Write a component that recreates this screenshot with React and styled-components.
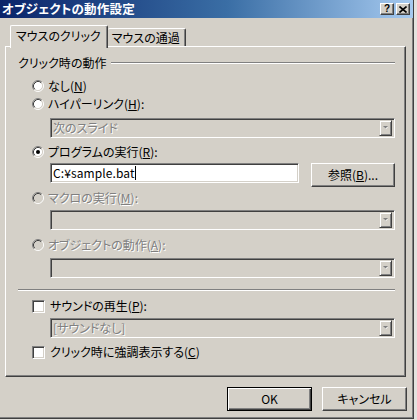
import React from 'react';
import styled, { createGlobalStyle } from 'styled-components';

const FONT = `"Noto Sans CJK JP", "Noto Sans", sans-serif`;

const GlobalStyle = createGlobalStyle`
  html, body {
    margin: 0;
    padding: 0;
    background: #e4e2de;
  }
  body {
    font-family: ${FONT};
    font-size: 12px;
    color: #000;
    font-feature-settings: "palt";
  }
`;

const Window = styled.div`
  width: 414px;
  height: 419px;
  box-sizing: border-box;
  background: #d4d0c8;
  border-right: 1px solid #404040;
  border-bottom: 1px solid #404040;
  box-shadow: inset -1px -1px 0 #808080;
  display: flex;
  flex-direction: column;
`;

const TitleBar = styled.div`
  height: 18px;
  flex: none;
  display: flex;
  align-items: center;
  justify-content: space-between;
  padding: 0 3px 0 2px;
  background: linear-gradient(to right, #0a246a 0%, #3a6ea5 55%, #a6caf0 100%);
`;

const TitleText = styled.div`
  color: #fff;
  font-weight: bold;
  font-size: 12.5px;
  line-height: 18px;
  letter-spacing: 0.2px;
`;

const TitleButtons = styled.div`
  display: flex;
  gap: 2px;
`;

const TitleButton = styled.div`
  width: 12px;
  height: 10px;
  background: #d4d0c8;
  border: 1px solid;
  border-color: #fff #404040 #404040 #fff;
  box-shadow: inset -1px -1px 0 #808080;
  display: flex;
  align-items: center;
  justify-content: center;
  font-family: "Liberation Sans", sans-serif;
  font-weight: bold;
  font-size: 10px;
  line-height: 10px;
`;

const Content = styled.div`
  flex: 1;
  display: flex;
  flex-direction: column;
  padding: 7px 0 0 5px;
`;

const TabStrip = styled.div`
  display: flex;
  align-items: flex-end;
  height: 21px;
  padding-left: 5px;
  position: relative;
  z-index: 1;
`;

const Tab = styled.div`
  box-sizing: border-box;
  height: ${p => (p.$active ? '23px' : '18px')};
  margin-bottom: ${p => (p.$active ? '-2px' : '0')};
  padding: ${p => (p.$active ? '2px 6px 0 5px' : '1px 5px 0 4px')};
  background: #d4d0c8;
  border-top: 1px solid #fff;
  border-left: ${p => (p.$active ? '1px solid #fff' : 'none')};
  border-right: 1px solid #404040;
  box-shadow: inset -1px 0 0 #808080;
  border-radius: 2px 2px 0 0;
  line-height: 16px;
  white-space: nowrap;
`;

const Panel = styled.div`
  width: 401px;
  height: 331px;
  box-sizing: border-box;
  border: 1px solid;
  border-color: #fff #404040 #404040 #fff;
  box-shadow: inset -1px -1px 0 #808080;
  padding: 0 10px 0 12px;
  display: flex;
  flex-direction: column;
`;

const GroupHeader = styled.div`
  display: flex;
  align-items: center;
  height: 14px;
  margin-top: 9px;
  line-height: 14px;
`;

const EtchedLine = styled.div`
  flex: 1;
  height: 0;
  border-top: 1px solid #808080;
  border-bottom: 1px solid #fff;
  margin-left: ${p => p.$inset || 0}px;
`;

const OptionRow = styled.label`
  display: flex;
  align-items: center;
  height: 14px;
  line-height: 14px;
  margin-top: ${p => p.$top}px;
  padding-left: 14px;
  white-space: nowrap;
  color: ${p => (p.$disabled ? '#808080' : '#000')};
  text-shadow: ${p => (p.$disabled ? '1px 1px 0 #fff' : 'none')};
`;

const OptionText = styled.span`
  margin-left: ${p => p.$gap}px;
`;

const Field = styled.div`
  margin-top: ${p => p.$top}px;
  margin-left: 32px;
  display: flex;
  gap: 12px;
  align-items: flex-start;
`;

const Sunken = styled.div`
  flex: 1;
  height: 20px;
  box-sizing: border-box;
  border: 1px solid;
  border-color: #808080 #fff #fff #808080;
  box-shadow: inset 1px 1px 0 #404040, inset -1px -1px 0 #d4d0c8;
  background: ${p => (p.$white ? '#fff' : '#d4d0c8')};
  display: flex;
  align-items: center;
  padding: 0 2px 0 2px;
  line-height: 16px;
  white-space: nowrap;
`;

const ComboText = styled.span`
  flex: 1;
  color: #808080;
  text-shadow: 1px 1px 0 #fff;
`;

const DropButton = styled.div`
  width: 13px;
  height: 16px;
  box-sizing: border-box;
  border: 1px solid;
  border-color: #d4d0c8 #404040 #404040 #d4d0c8;
  box-shadow: inset 1px 1px 0 #fff, inset -1px -1px 0 #808080;
  display: flex;
  align-items: center;
  justify-content: center;
`;

const Caret = styled.span`
  display: inline-block;
  width: 1px;
  height: 14px;
  background: #000;
  vertical-align: middle;
`;

const InputText = styled.span`
  font-family: ${FONT};
  letter-spacing: 0.1px;
`;

const PushButton = styled.div`
  width: ${p => p.$width}px;
  height: 24px;
  box-sizing: border-box;
  background: #d4d0c8;
  border: 1px solid;
  border-color: ${p => (p.$default ? '#000' : '#fff #404040 #404040 #fff')};
  box-shadow: ${p =>
    p.$default
      ? 'inset 1px 1px 0 #fff, inset -1px -1px 0 #404040, inset -2px -2px 0 #808080'
      : 'inset -1px -1px 0 #808080'};
  display: flex;
  align-items: center;
  justify-content: center;
  line-height: 16px;
  white-space: nowrap;
  flex: none;
`;

const Separator = styled.div`
  margin-top: 11px;
  display: flex;
`;

const Footer = styled.div`
  display: flex;
  justify-content: flex-end;
  gap: 10px;
  margin-top: 10px;
  padding-right: 6px;
`;

const Radio = ({ checked, disabled }) => (
  <svg width="12" height="12" viewBox="0 0 12 12">
    <circle cx="6" cy="6" r="4.5" fill={disabled ? '#d4d0c8' : '#fff'} />
    <path d="M2.11 9.89 A5.5 5.5 0 0 1 9.89 2.11" fill="none" stroke="#808080" />
    <path d="M9.89 2.11 A5.5 5.5 0 0 1 2.11 9.89" fill="none" stroke="#fff" />
    <path d="M2.82 9.18 A4.5 4.5 0 0 1 9.18 2.82" fill="none" stroke="#404040" />
    <path d="M9.18 2.82 A4.5 4.5 0 0 1 2.82 9.18" fill="none" stroke="#d4d0c8" />
    {checked && <circle cx="6" cy="6" r="2" fill="#000" />}
  </svg>
);

const CheckBox = styled.span`
  width: 13px;
  height: 13px;
  box-sizing: border-box;
  flex: none;
  border: 1px solid;
  border-color: #808080 #fff #fff #808080;
  box-shadow: inset 1px 1px 0 #404040, inset -1px -1px 0 #d4d0c8;
  background: #fff;
`;

const Arrow = () => (
  <svg width="7" height="4" viewBox="0 0 7 4">
    <path d="M2 1h4L4 3z" fill="#fff" />
    <path d="M1 0h5L3.5 2.5z" fill="#808080" />
  </svg>
);

const Combo = ({ text, top }) => (
  <Field $top={top}>
    <Sunken>
      <ComboText>{text}</ComboText>
      <DropButton>
        <Arrow />
      </DropButton>
    </Sunken>
  </Field>
);

const Option = ({ top, label, mn, tail = '', checked, disabled, box }) => (
  <OptionRow $top={top} $disabled={disabled}>
    {box ? <CheckBox /> : <Radio checked={checked} disabled={disabled} />}
    <OptionText $gap={box ? 5 : 4}>
      {label}(<u>{mn}</u>){tail}
    </OptionText>
  </OptionRow>
);

export default function App() {
  return (
    <>
      <GlobalStyle />
      <Window>
        <TitleBar>
          <TitleText>オブジェクトの動作設定</TitleText>
          <TitleButtons>
            <TitleButton>?</TitleButton>
            <TitleButton>
              <svg width="8" height="7" viewBox="0 0 8 7">
                <path d="M0.5 0.5 L7.5 6.5 M7.5 0.5 L0.5 6.5" stroke="#000" strokeWidth="1.6" />
              </svg>
            </TitleButton>
          </TitleButtons>
        </TitleBar>
        <Content>
          <TabStrip>
            <Tab $active>マウスのクリック</Tab>
            <Tab>マウスの通過</Tab>
          </TabStrip>
          <Panel>
            <GroupHeader>
              クリック時の動作
              <EtchedLine $inset={5} />
            </GroupHeader>
            <Option top={9} label="なし" mn="N" />
            <Option top={4} label="ハイパーリンク" mn="H" tail=":" />
            <Combo top={7} text="次のスライド" />
            <Option top={7} label="プログラムの実行" mn="R" tail=":" checked />
            <Field $top={4}>
              <Sunken $white>
                <InputText>C:¥sample.bat</InputText>
                <Caret />
              </Sunken>
              <PushButton $width={84}>
                参照(<u>B</u>)...
              </PushButton>
            </Field>
            <Option top={4} label="マクロの実行" mn="M" tail=":" disabled />
            <Combo top={5} text="" />
            <Option top={8} label="オブジェクトの動作" mn="A" tail=":" disabled />
            <Combo top={6} text="" />
            <Separator>
              <EtchedLine />
            </Separator>
            <Option top={8} label="サウンドの再生" mn="P" tail=":" box />
            <Combo top={5} text="[サウンドなし]" />
            <Option top={7} label="クリック時に強調表示する" mn="C" box />
          </Panel>
          <Footer>
            <PushButton $width={85} $default>OK</PushButton>
            <PushButton $width={85}>キャンセル</PushButton>
          </Footer>
        </Content>
      </Window>
    </>
  );
}
